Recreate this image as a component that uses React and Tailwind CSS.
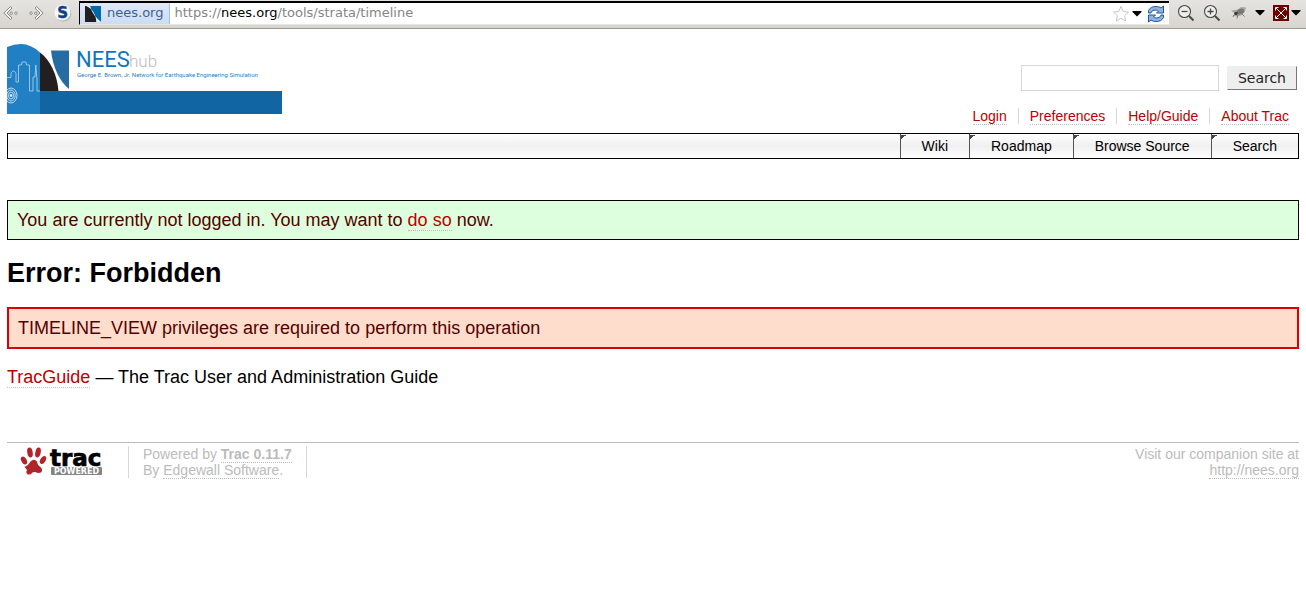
import React from "react";

const link = "text-[#bb0000] border-b border-dotted border-[#bbbbbb]";
const footerLink = "border-b border-dotted border-[#bbbbbb]";

function Arrow({ label, flip }) {
  return (
    <button aria-label={label} className="flex">
      <svg width="16" height="16" viewBox="0 0 16 16" className={flip ? "-scale-x-100" : ""} fill="#f4f3f1" stroke="#8a8984" strokeWidth="1">
        <path d="M7.5 1.5L0.8 8l6.7 6.5 1.5-1.600L4 8l5-4.900z" />
        <rect x="7" y="7" width="2.4" height="2.4" rx="1" />
        <rect x="11.8" y="7" width="2.4" height="2.4" rx="1" />
      </svg>
    </button>
  );
}

function Caret() {
  return (
    <svg width="10" height="6" viewBox="0 0 10 6" aria-hidden="true">
      <path d="M0.5 0h9v1L5 5.500 0.500 1z" fill="#000" />
    </svg>
  );
}

function Magnifier({ label, plus }) {
  return (
    <button aria-label={label} className="flex">
      <svg width="18" height="18" viewBox="0 0 18 18" fill="none" stroke="#454a47">
        <circle cx="7.5" cy="7.5" r="6" fill="#eeefed" strokeWidth="1.1" />
        <path d="M12 12l4.500 4.500" strokeWidth="2" />
        <path d={plus ? "M4.5 7.5h6M7.5 4.5v6" : "M4.5 7.5h6"} strokeWidth="1.3" />
      </svg>
    </button>
  );
}

function BrowserBar() {
  return (
    <div className="flex h-[29px] items-start border-b border-[#9d9a93] bg-gradient-to-b from-[#e6e4e1] to-[#d8d5cf] pl-[3px]">
      <div className="flex h-[26px] w-[76px] shrink-0 items-center gap-[9px]">
        <Arrow label="Back" />
        <Arrow label="Forward" flip />
        <button aria-label="Site" className="flex">
          <svg width="20" height="18" viewBox="0 0 20 18">
            <circle cx="10.5" cy="9.8" r="7.800" fill="#b3b2b0" />
            <circle cx="9.5" cy="8.5" r="8" fill="#f5f6f8" />
            <text x="9.700" y="14" textAnchor="middle" fontFamily="DejaVu Sans, sans-serif" fontWeight="bold" fontSize="15" fill="#123f85" stroke="#123f85" strokeWidth="0.4">S</text>
          </svg>
        </button>
      </div>
      <div className="mt-px flex h-6 min-w-0 grow items-center border-t-2 border-l border-black border-b border-b-[#e8e8e8] bg-white font-['DejaVu_Sans',sans-serif] text-[13px] leading-5">
        <div className="flex h-[21px] shrink-0 items-center gap-[6px] border-r border-[#a9bede] bg-gradient-to-b from-[#dfe8f6] to-[#cddcf2] pl-[5px] pr-[6px] text-[#3c5f96]">
          <svg width="16" height="16" viewBox="0 0 16 16" aria-hidden="true">
            <path d="M0 0h1.500C8 3 11 9 11.500 16H0z" fill="#231f20" />
            <path d="M5 0h11v16C12 13 7 7 5 0z" fill="#0068ab" />
            <path d="M1.500 0H5c2 7 6 12 11 16h-4.500C11 9 8 3 1.500 0z" fill="#e9f0f8" />
          </svg>
          <span className="pb-px">nees.org</span>
        </div>
        <div role="textbox" aria-label="Address" tabIndex={0} className="grow pb-px pl-1 text-[#858585]">
          https://<span className="text-black">nees.org</span>/tools/strata/timeline
        </div>
        <button aria-label="Bookmark" className="flex">
          <svg width="18" height="18" viewBox="0 0 18 18">
            <path d="M9 1.500l2.300 5 5.200.6-3.900 3.600 1.100 5.300L9 13.300 4.300 16l1.100-5.300L1.500 7.100l5.200-.6z" fill="#fff" stroke="#c6c6c6" />
          </svg>
        </button>
        <button aria-label="History" className="mx-[2px] flex"><Caret /></button>
        <button aria-label="Reload" className="ml-[3px] mr-1 flex">
          <svg width="18" height="18" viewBox="0 0 18 18" strokeLinejoin="round">
            <path d="M1.500 8V5.500C3 2.500 5.500 1.500 9 1.500c2 0 3.700.5 5 1.500l2.500-2v7H9.500l2-2C9 4.300 4.500 5 4 8z" fill="#8db3e2" stroke="#25549a" />
            <path d="M16.500 10v2.500c-1.500 3-4 4-7.500 4-2 0-3.700-.5-5-1.500l-2.500 2v-7h7l-2 2c2.500 1.700 7 1 7.500-2z" fill="#8db3e2" stroke="#25549a" />
          </svg>
        </button>
      </div>
      <div className="flex h-[26px] shrink-0 items-center pl-2">
        <Magnifier label="Zoom out" />
        <div className="w-2" />
        <Magnifier label="Zoom in" plus />
        <button aria-label="Firebug" className="ml-[10px] flex">
          <svg width="16" height="14" viewBox="0 0 16 14">
            <path d="M0 4.500l7-1 3-2.500 5 .5-1 4-4 4-5 1-3-1 2-2z" fill="#a9a8a3" />
            <ellipse cx="9.500" cy="5.500" rx="3.800" ry="2.600" fill="#777773" transform="rotate(-20 9.500 5.500)" />
            <circle cx="5" cy="7.500" r="1.800" fill="#3c3c3a" />
            <path d="M3 9l-1 2M7 9l-1 3.500M11 8l2.500 2.500" stroke="#777" />
          </svg>
        </button>
        <button aria-label="Firebug menu" className="ml-2 flex"><Caret /></button>
        <button aria-label="Full screen" className="ml-2 flex">
          <svg width="16" height="16" viewBox="0 0 16 16">
            <rect width="16" height="16" fill="#6f0000" />
            <path d="M3 3l10 10M13 3L3 13M2.500 5.500v-3h3M10.500 2.500h3v3M13.500 10.500v3h-3M5.500 13.500h-3v-3" fill="none" stroke="#fff" />
          </svg>
        </button>
        <button aria-label="Full screen menu" className="ml-[2px] mr-[5px] flex"><Caret /></button>
      </div>
    </div>
  );
}

function NeesLogo() {
  return (
    <a href="#home" aria-label="NEEShub" className="block">
      <svg width="276" height="72" viewBox="0 0 276 72">
        <path d="M0 4Q7 1 14 1 24 1 33 9.500V71H0z" fill="#2180c4" />
        <path d="M33 9.500C43 17 50 31 51.500 48H33z" fill="#231f20" />
        <path d="M44 7.500h18V46C53 39 46 25 44 7.500z" fill="#276ba3" />
        <rect x="33" y="48" width="242" height="23" fill="#1165a3" />
        <path d="M0 34.500h4V30q2.500-4 5 0v9h2.500V22h3l.5-3h4l.5 3h3v26H26V34h2l.8-12 .9 12H30v14h3" fill="none" stroke="#a5cdea" strokeWidth="0.9" />
        <g fill="none" stroke="#cfe3f3" strokeWidth="0.9">
          <circle cx="4" cy="52.500" r="1" fill="#fff" />
          <ellipse cx="4" cy="52.500" rx="2.500" ry="3.500" />
          <ellipse cx="4" cy="52.500" rx="4.200" ry="5.500" />
          <ellipse cx="4" cy="52.500" rx="6" ry="7.500" />
        </g>
        <text x="69" y="24" fontFamily="Roboto, sans-serif" fontSize="22" fill="#0f75bd">NEES</text>
        <text x="122" y="24" fontFamily="Roboto, sans-serif" fontWeight="300" fontSize="17" fill="#bdbdbd">hub</text>
        <text x="70" y="34" fontFamily="Roboto, sans-serif" fontSize="6" fill="#2f7fb8">George E. Brown, Jr. Network for Earthquake Engineering Simulation</text>
      </svg>
    </a>
  );
}

function TracLogo() {
  return (
    <a href="#trac" aria-label="Trac Powered" className="block">
      <svg width="107" height="30" viewBox="0 0 107 30">
        <g fill="#b0252a">
          <ellipse cx="17" cy="14.500" rx="2.600" ry="4.300" transform="rotate(-28 17 14.500)" />
          <ellipse cx="23" cy="6.500" rx="2.700" ry="5" transform="rotate(-10 23 6.500)" />
          <ellipse cx="31" cy="6.500" rx="2.700" ry="5" transform="rotate(12 31 6.500)" />
          <ellipse cx="36" cy="14" rx="2.600" ry="4.300" transform="rotate(32 36 14)" />
          <path d="M17.500 21q4-1.500 6-5.500 3.500-3.500 6.500 0 .5 4 3.500 5.500 3 3 .5 5.500-3 1-5.500-.5-2.500-.5-3.500 1-2 2.500-5 1-1.500-2 0-4-1-1.500-2.500-3z" />
        </g>
        <text x="43" y="20" fontFamily="DejaVu Sans, sans-serif" fontWeight="bold" fontSize="23" fill="#000" stroke="#000" strokeWidth="0.7">trac</text>
        <rect x="44" y="21" width="51" height="8" rx="1" fill="#858585" />
        <text x="69.500" y="28" textAnchor="middle" fontFamily="DejaVu Sans, sans-serif" fontWeight="bold" fontSize="8" fill="#fff">POWERED</text>
      </svg>
    </a>
  );
}

function Header() {
  return (
    <header>
      <div className="flex items-start justify-between">
        <div className="pt-[14px]"><NeesLogo /></div>
        <form className="flex items-center gap-2 pr-[2px] pt-9" onSubmit={(e) => e.preventDefault()}>
          <input aria-label="Search query" type="text" className="h-[26px] w-[198px] border border-[#d7d7d7] bg-white px-1 text-sm" />
          <button className="h-6 border border-[#eeeeee] border-b-[#777777] border-r-[#777777] bg-[#eeeeee] px-[10px] font-['DejaVu_Sans',sans-serif] text-sm leading-5 text-[#222222]">Search</button>
        </form>
      </div>
      <nav aria-label="Account" className="-mt-[7px] flex justify-end text-sm leading-4">
        {["Login", "Preferences", "Help/Guide", "About Trac"].map((t) => (
          <span key={t} className="border-r border-[#d7d7d7] px-[11px] last:border-0 last:pr-[10px]">
            <a href="#account" className={link}>{t}</a>
          </span>
        ))}
      </nav>
      <nav aria-label="Main" className="mt-[9px] flex h-[26px] justify-end border border-black bg-gradient-to-b from-white via-[#f0f0f0] to-white text-sm leading-6 text-black">
        {["Wiki", "Roadmap", "Browse Source", "Search"].map((t) => (
          <a key={t} href="#section" className="flex border-l border-[#555555]">
            <svg width="5" height="5" className="mt-px" aria-hidden="true"><path d="M0 0h5v1H3v1H2v1H1v1H0z" fill="#444" /></svg>
            <span className="pl-4 pr-[21px]">{t}</span>
          </a>
        ))}
      </nav>
    </header>
  );
}

export default function App() {
  return (
    <div className="bg-white pb-8 font-['Liberation_Sans',Arial,sans-serif] text-black">
      <BrowserBar />
      <div className="px-[7px]">
        <Header />
        <main className="text-lg leading-[22px]">
          <p className="mt-[41px] border border-black bg-[#ddffdd] px-[9px] py-2 text-[#550000]">
            You are currently not logged in. You may want to <a href="#login" className={link}>do so</a> now.
          </p>
          <h1 className="mt-[17px] text-[27px] font-bold leading-8">Error: Forbidden</h1>
          <p className="mt-[18px] border-2 border-[#dd0000] bg-[#ffddcc] px-[9px] py-2 text-[#550000]">
            TIMELINE_VIEW privileges are required to perform this operation
          </p>
          <p className="mt-[17px]">
            <a href="#guide" className={link}>TracGuide</a> — The Trac User and Administration Guide
          </p>
        </main>
        <footer className="mt-[54px] flex items-start justify-between border-t border-[#bbbbbb] pt-[3px] text-sm leading-4 text-[#bbbbbb]">
          <div className="flex">
            <div className="w-[121px]"><TracLogo /></div>
            <p className="border-x border-[#d7d7d7] px-[14px]">
              Powered by <a href="#about" className={`${footerLink} font-bold`}>Trac 0.11.7</a>
              <br />
              By <a href="#edgewall" className={footerLink}>Edgewall Software</a>.
            </p>
          </div>
          <p className="text-right">
            Visit our companion site at
            <br />
            <a href="#nees" className={footerLink}>http://nees.org</a>
          </p>
        </footer>
      </div>
    </div>
  );
}
